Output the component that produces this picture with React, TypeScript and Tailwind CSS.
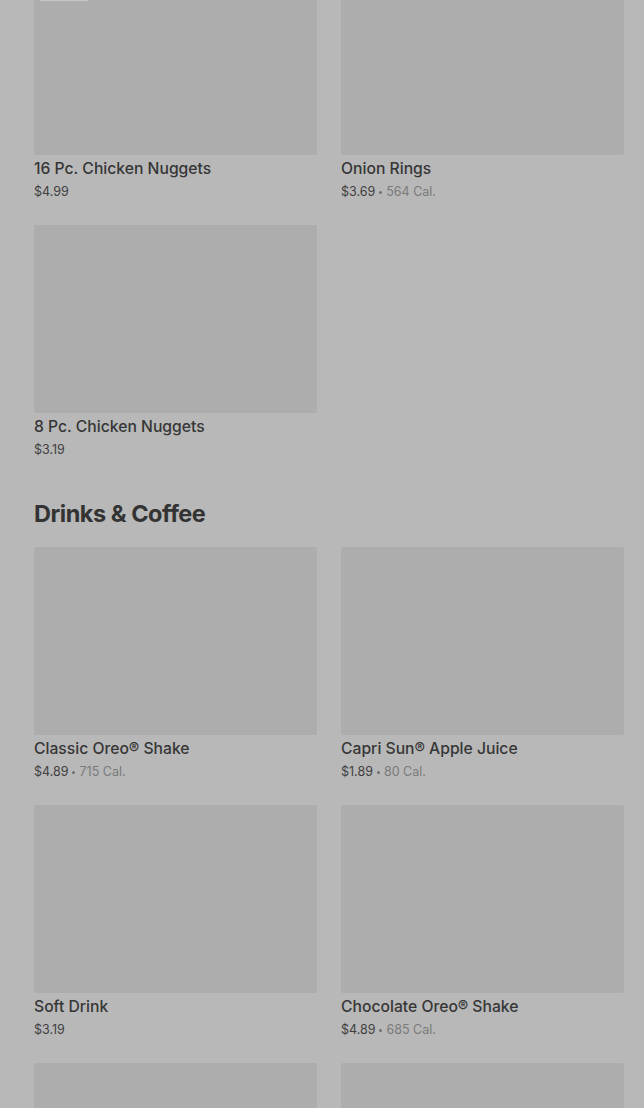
type Item = {
  name: string;
  price: string;
  cal?: string;
};

const topItems: Item[] = [
  { name: '16 Pc. Chicken Nuggets', price: '$4.99' },
  { name: 'Onion Rings', price: '$3.69', cal: '564 Cal.' },
  { name: '8 Pc. Chicken Nuggets', price: '$3.19' },
];

const drinks: Item[] = [
  { name: 'Classic Oreo® Shake', price: '$4.89', cal: '715 Cal.' },
  { name: 'Capri Sun® Apple Juice', price: '$1.89', cal: '80 Cal.' },
  { name: 'Soft Drink', price: '$3.19' },
  { name: 'Chocolate Oreo® Shake', price: '$4.89', cal: '685 Cal.' },
];

const ItemCard = ({ item, cut, badge }: { item: Item; cut?: boolean; badge?: boolean }) => (
  <div className="flex flex-col">
    <div
      className={
        cut
          ? 'relative h-[155px] rounded-b-[2px] bg-[#adadad]'
          : 'relative h-[188px] rounded-[2px] bg-[#adadad]'
      }
    >
      {badge && <div className="absolute left-[6px] top-0 h-[1px] w-[48px] bg-[#c6c6c6]" />}
    </div>
    <p className="mt-[4px] h-[20px] text-[15.7px] leading-[20px] font-medium text-[#363636]">{item.name}</p>
    <div className="mt-[4px] flex h-[18px] items-center text-[12.5px] leading-[18px] text-[#3f3f3f]">
      <span>{item.price}</span>
      {item.cal && (
        <>
          <span className="mx-[4px] h-[3px] w-[3px] rounded-full bg-[#6e6e6e]" />
          <span className="text-[#7a7a7a]">{item.cal}</span>
        </>
      )}
    </div>
  </div>
);

export default function App() {
  return (
    <div className="min-h-[1108px] overflow-hidden bg-[#b8b8b8] pl-[34px] pr-[20px] font-['Inter','Liberation_Sans',sans-serif]">
      <div className="grid grid-cols-2 gap-x-6 gap-y-6">
        <ItemCard item={topItems[0]} cut badge />
        <ItemCard item={topItems[1]} cut />
        <ItemCard item={topItems[2]} />
      </div>

      <h2 className="mt-[39px] mb-[17px] h-[32px] text-[23.5px] leading-[32px] font-bold tracking-[-0.02em] text-[#333333]">
        Drinks &amp; Coffee
      </h2>

      <div className="grid grid-cols-2 gap-x-6 gap-y-6">
        {drinks.map((d) => (
          <ItemCard key={d.name} item={d} />
        ))}
        <div className="h-[188px] rounded-[2px] bg-[#adadad]" />
        <div className="h-[188px] rounded-[2px] bg-[#adadad]" />
      </div>
    </div>
  );
}
